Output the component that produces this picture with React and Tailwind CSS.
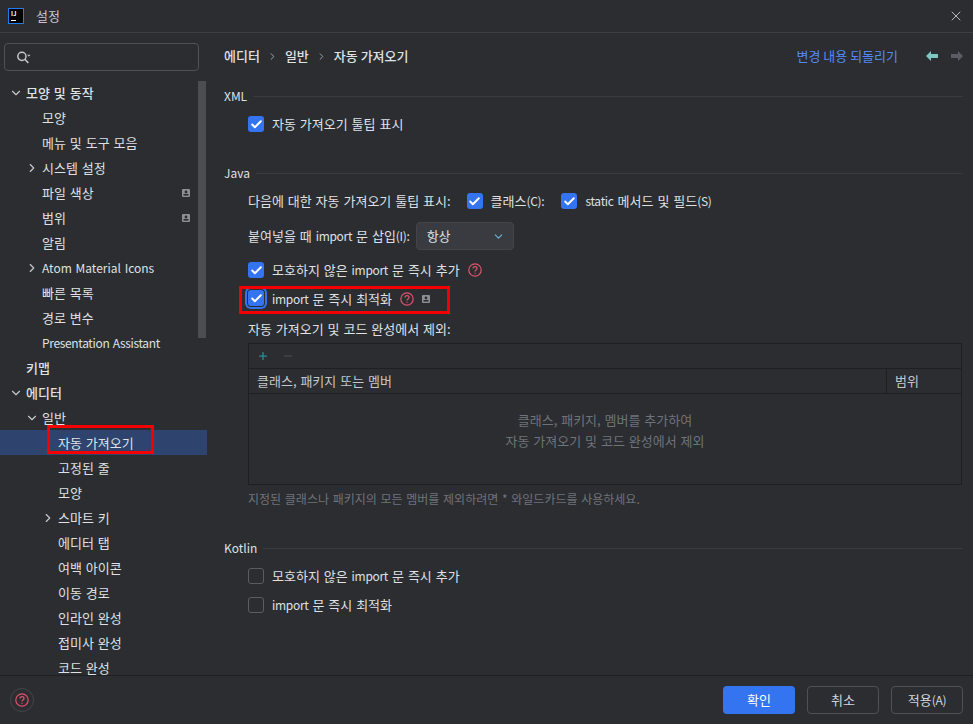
import { Check, ChevronDown, ChevronRight, Plus, Minus, X } from 'lucide-react';

const sans = { fontFamily: '"Noto Sans CJK KR", sans-serif' };

const treeItems = [
  { label: '모양 및 동작', depth: 0, arrow: 'down', bold: true },
  { label: '모양', depth: 1 },
  { label: '메뉴 및 도구 모음', depth: 1 },
  { label: '시스템 설정', depth: 1, arrow: 'right' },
  { label: '파일 색상', depth: 1, badge: true },
  { label: '범위', depth: 1, badge: true },
  { label: '알림', depth: 1 },
  { label: 'Atom Material Icons', depth: 1, arrow: 'right', latin: 'text-[12px]' },
  { label: '빠른 목록', depth: 1 },
  { label: '경로 변수', depth: 1 },
  { label: 'Presentation Assistant', depth: 1, latin: 'text-[12px] tracking-[-0.35px]' },
  { label: '키맵', depth: 0, bold: true },
  { label: '에디터', depth: 0, arrow: 'down', bold: true },
  { label: '일반', depth: 1, arrow: 'down' },
  { label: '자동 가져오기', depth: 2, selected: true },
  { label: '고정된 줄', depth: 2 },
  { label: '모양', depth: 2 },
  { label: '스마트 키', depth: 2, arrow: 'right' },
  { label: '에디터 탭', depth: 2 },
  { label: '여백 아이콘', depth: 2 },
  { label: '이동 경로', depth: 2 },
  { label: '인라인 완성', depth: 2 },
  { label: '접미사 완성', depth: 2 },
  { label: '코드 완성', depth: 2 },
];

const depthPad = ['pl-[26px]', 'pl-[42px]', 'pl-[58px]'];
const arrowPad = ['left-[9px]', 'left-[25px]', 'left-[41px]'];

function L({ children }) {
  return <span className="text-[12px] tracking-[-0.3px]">{children}</span>;
}

function ProjectBadge({ className = '' }) {
  return (
    <svg width="8" height="8" viewBox="0 0 8 8" className={className}>
      <rect width="8" height="8" rx="1" fill="#8c8f94" />
      <circle cx="4" cy="3" r="1.4" fill="#2b2d30" />
      <rect x="1.5" y="5" width="5" height="1.6" fill="#2b2d30" />
    </svg>
  );
}

function HelpIcon({ size = 14, className = '' }) {
  return (
    <svg width={size} height={size} viewBox="0 0 14 14" fill="none" strokeWidth="1.2" className={className}>
      <circle cx="7" cy="7" r="6.2" stroke="#e0526e" />
      <path d="M5 5.6c0-1.2.9-1.900 2-1.900s2 .7 2 1.700c0 1.500-2 1.500-2 3" stroke="#e0526e" />
      <path d="M7 9.700v1.100" stroke="#e0526e" />
    </svg>
  );
}

function TreeRow({ item }) {
  return (
    <div className={`relative flex h-[25px] shrink-0 items-center ${depthPad[item.depth]} ${item.selected ? 'bg-[#2e436e]' : ''}`}>
      {item.arrow === 'down' && <ChevronDown size={14} strokeWidth={2} className={`absolute ${arrowPad[item.depth]} text-[#c5c7cc]`} />}
      {item.arrow === 'right' && <ChevronRight size={14} strokeWidth={2} className={`absolute ${arrowPad[item.depth]} text-[#c5c7cc]`} />}
      <span className={`text-[#dfe1e5] ${item.latin || 'text-[13px]'} ${item.bold ? 'font-medium' : ''}`}>{item.label}</span>
      {item.badge && <ProjectBadge className="absolute left-[182px]" />}
    </div>
  );
}

function Checkbox({ checked, focused }) {
  if (!checked) {
    return <span className="h-4 w-4 shrink-0 rounded-[3px] border border-[#5a5d63] bg-[#2b2d30]" />;
  }
  return (
    <span className={`flex h-4 w-4 shrink-0 items-center justify-center rounded-[3px] bg-[#3574f0] ${focused ? 'shadow-[0_0_0_1px_#2b2d30,0_0_0_3px_#3574f0]' : ''}`}>
      <Check size={13} strokeWidth={3.5} className="text-white" />
    </span>
  );
}

function SectionTitle({ children }) {
  return (
    <div className="flex h-4 items-center gap-[6px]">
      <span className="text-[12px] text-[#dfe1e5]">{children}</span>
      <span className="h-px flex-1 bg-[#393b40]" />
    </div>
  );
}

export default function App() {
  return (
    <div style={sans} className="relative flex h-[724px] w-[973px] flex-col overflow-hidden bg-[#2b2d30] text-[13px] text-[#dfe1e5] [word-spacing:1px]">
      {/* title bar */}
      <div className="flex h-[33px] shrink-0 items-center border-b border-[#3c3e43] pl-2 pr-[9px]">
        <div className="flex h-4 w-4 flex-col justify-between border border-[#1e7ff0] bg-black px-[2px] py-px">
          <span className="text-[6px] font-bold leading-[7px] text-white">IJ</span>
          <span className="mb-px h-px w-[5px] bg-white" />
        </div>
        <span className="ml-[12px] text-[13px] text-[#c5c7cc]">설정</span>
        <X size={16} strokeWidth={1.2} className="ml-auto text-[#e0e0e0]" />
      </div>

      <div className="flex min-h-0 flex-1">
        {/* sidebar */}
        <div className="relative flex w-[207px] shrink-0 flex-col overflow-hidden">
          <div className="ml-1 mt-[10px] flex h-[28px] w-[195px] shrink-0 items-center rounded-[4px] border border-[#4e5157] pl-[11px]">
            <svg width="15" height="15" viewBox="0 0 14 14" fill="none" stroke="#c5c7cc" strokeWidth="1.4">
              <circle cx="5.500" cy="6" r="3.800" />
              <path d="M8.200 8.700L11.500 12" />
              <path d="M10.500 4.500h3l-1.500 1.800z" fill="#c5c7cc" stroke="none" />
            </svg>
          </div>
          <div className="mt-[9px] flex flex-col">
            {treeItems.map((item, idx) => (
              <TreeRow key={idx} item={item} />
            ))}
          </div>
          <div className="absolute left-[198px] top-[48px] h-[257px] w-2 bg-[#4b4d51]" />
          <div className="absolute left-[47px] top-[392px] h-[29px] w-[107px] border-[3px] border-[#f40000]" />
        </div>

        {/* main panel */}
        <div className="relative flex min-w-0 flex-1 flex-col pl-[17px] pr-[10px]">
          <div className="mt-[14px] flex h-[18px] shrink-0 items-center [word-spacing:0]">
            <span className="font-medium">에디터</span>
            <ChevronRight size={11} className="mx-[7px] text-[#a8abb0]" />
            <span className="font-medium">일반</span>
            <ChevronRight size={11} className="mx-[7px] text-[#a8abb0]" />
            <span className="font-medium">자동 가져오기</span>
            <span className="ml-auto text-[#548af7]">변경 내용 되돌리기</span>
            <svg width="12" height="10" viewBox="0 0 12 10" className="ml-[28px]">
              <path d="M0 5L5 0v3h7v4H5v3z" fill="#7fc8c2" />
            </svg>
            <svg width="12" height="10" viewBox="0 0 12 10" className="ml-[13px]">
              <path d="M12 5L7 0v3H0v4h7v3z" fill="#5a5d63" />
            </svg>
          </div>

          <div className="mt-[23px]"><SectionTitle>XML</SectionTitle></div>
          <div className="ml-6 mt-[12px] flex h-4 items-center gap-2">
            <Checkbox checked />
            <span>자동 가져오기 툴팁 표시</span>
          </div>

          <div className="mt-[33px]"><SectionTitle>Java</SectionTitle></div>
          <div className="ml-6 mt-[12px] flex h-4 items-center">
            <span>다음에 대한 자동 가져오기 툴팁 표시:</span>
            <span className="ml-[16px]"><Checkbox checked /></span>
            <span className="ml-2">클래스<L>(C):</L></span>
            <span className="ml-[17px]"><Checkbox checked /></span>
            <span className="ml-2"><L>static</L> 메서드 및 필드<L>(S)</L></span>
          </div>
          <div className="ml-6 mt-[13px] flex h-[28px] items-center">
            <span>붙여넣을 때 <L>import</L> 문 삽입<L>(I):</L></span>
            <div className="ml-[6px] flex h-[28px] w-[98px] items-center justify-between rounded-[4px] border border-[#43454a] bg-[#393b40] pl-[10px] pr-[8px]">
              <span>항상</span>
              <ChevronDown size={13} className="text-[#6bb5d6]" />
            </div>
          </div>
          <div className="ml-6 mt-[12px] flex h-4 items-center gap-2">
            <Checkbox checked />
            <span>모호하지 않은 <L>import</L> 문 즉시 추가</span>
            <HelpIcon />
          </div>
          <div className="ml-6 mt-[12px] flex h-4 items-center gap-2">
            <Checkbox checked focused />
            <span className="mt-[2px]"><L>import</L> 문 즉시 최적화</span>
            <HelpIcon className="mt-px" />
            <ProjectBadge className="mt-px" />
          </div>
          <div className="absolute left-[32px] top-[253px] h-[28px] w-[211px] border-[3px] border-[#f40000]" />
          <div className="ml-6 mt-[14px] flex h-[18px] items-center">자동 가져오기 및 코드 완성에서 제외:</div>

          <div className="ml-6 mr-px mt-[5px] flex h-[142px] flex-col border border-[#1e1f22]">
            <div className="flex h-[25px] shrink-0 items-center gap-[13px] border-b border-[#1e1f22] pl-2">
              <Plus size={12} strokeWidth={2.5} className="text-[#2a8f9c]" />
              <Minus size={12} strokeWidth={2} className="text-[#4e5157]" />
            </div>
            <div className="flex h-[25px] shrink-0 items-center border-b border-[#1e1f22] text-[#c5c7cc]">
              <span className="flex-1 pl-2">클래스, 패키지 또는 멤버</span>
              <span className="flex h-full w-[75px] items-center border-l border-[#1e1f22] pl-2">범위</span>
            </div>
            <div className="flex flex-1 flex-col items-center justify-center gap-[2px] pb-[18px] text-[#6f737a]">
              <span>클래스, 패키지, 멤버를 추가하여</span>
              <span>자동 가져오기 및 코드 완성에서 제외</span>
            </div>
          </div>
          <div className="ml-6 mt-[6px] flex h-4 items-center text-[12px] text-[#6f737a]">
            지정된 클래스나 패키지의 모든 멤버를 제외하려면 * 와일드카드를 사용하세요.
          </div>

          <div className="mt-[33px]"><SectionTitle>Kotlin</SectionTitle></div>
          <div className="ml-6 mt-[12px] flex h-4 items-center gap-2">
            <Checkbox />
            <span>모호하지 않은 <L>import</L> 문 즉시 추가</span>
          </div>
          <div className="ml-6 mt-[13px] flex h-4 items-center gap-2">
            <Checkbox />
            <span><L>import</L> 문 즉시 최적화</span>
          </div>
        </div>
      </div>

      {/* footer */}
      <div className="flex h-[49px] shrink-0 items-center border-t border-[#1e1f22] pl-[10px] pr-[10px]">
        <span className="flex h-[24px] w-[24px] items-center justify-center rounded-full border border-[#43454a]">
          <HelpIcon />
        </span>
        <button className="ml-auto h-[28px] w-[72px] rounded-[4px] bg-[#3574f0] text-[13px] text-white">확인</button>
        <button className="ml-3 h-[28px] w-[72px] rounded-[4px] border border-[#4e5157] text-[13px] text-[#d5d7dc]">취소</button>
        <button className="ml-3 h-[28px] w-[72px] rounded-[4px] border border-[#4e5157] text-[13px] text-[#d5d7dc]">적용<L>(A)</L></button>
      </div>
    </div>
  );
}
